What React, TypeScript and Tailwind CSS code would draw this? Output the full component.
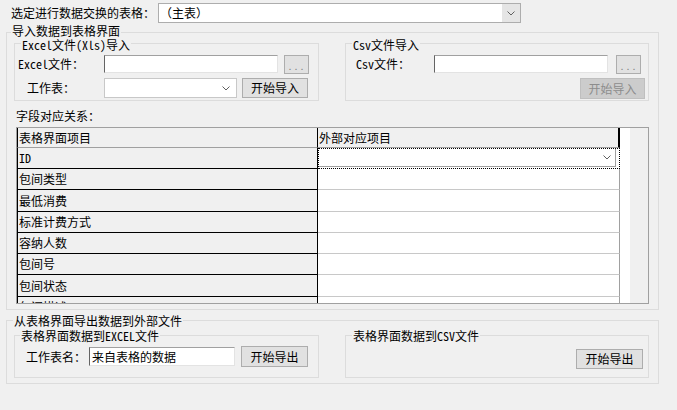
import React from 'react';

const font = "font-['Noto_Sans_Mono_CJK_SC','Noto_Sans_CJK_SC',sans-serif]";

function Chevron() {
  return (
    <svg width="8" height="5" viewBox="0 0 8 5">
      <polyline points="0.5,0.5 4,4 7.5,0.5" fill="none" stroke="#606060" strokeWidth="1" />
    </svg>
  );
}

// 分组框标题：压在边框线上
function Legend({ children, className = '' }: { children: React.ReactNode; className?: string }) {
  return <div className={`w-fit bg-[#f0f0f0] px-px leading-[12px] ${className}`}>{children}</div>;
}

function TextBox({ className = '', value = '' }: { className?: string; value?: string }) {
  return (
    <div
      className={`flex items-center bg-white border border-t-[#a0a0a0] border-l-[#646464] border-r-[#e3e3e3] border-b-[#e3e3e3] pl-[2px] ${className}`}
    >
      {value}
    </div>
  );
}

function Button({ children, className = '', disabled = false }: { children: React.ReactNode; className?: string; disabled?: boolean }) {
  return (
    <div
      className={`flex items-center justify-center border ${
        disabled ? 'bg-[#cccccc] border-[#bfbfbf] text-[#8d8d8d]' : 'bg-[#e1e1e1] border-[#adadad]'
      } ${className}`}
    >
      {children}
    </div>
  );
}

function DotsButton({ className = '' }: { className?: string }) {
  return (
    <div className={`flex items-end justify-center pb-[3px] bg-[#e1e1e1] border border-[#adadad] ${className}`}>
      <span className="text-[#808080] text-[10px] leading-[8px] tracking-[1px]">...</span>
    </div>
  );
}

const rows = [
  { name: 'ID', h: 'h-[21px]' },
  { name: '包间类型', h: 'h-[21px]' },
  { name: '最低消费', h: 'h-[22px]' },
  { name: '标准计费方式', h: 'h-[21px]' },
  { name: '容纳人数', h: 'h-[21px]' },
  { name: '包间号', h: 'h-[21px]' },
  { name: '包间状态', h: 'h-[22px]' },
  { name: '包间描述', h: 'h-[21px]' },
];

export default function App() {
  return (
    <div className={`w-[677px] h-[410px] overflow-hidden bg-[#f0f0f0] text-[12px] leading-[14px] text-black ${font}`}>
      {/* 表格选择 */}
      <div className="flex items-center pt-[3px]">
        <span className="ml-[11px] w-[147px]">选定进行数据交换的表格：</span>
        <div className="flex h-[20px] w-[363px] border border-[#adadad] bg-white">
          <div className="flex flex-1 items-center pl-[1px]">（主表）</div>
          <div className="flex w-[18px] items-center justify-center bg-[#e5e5e5]">
            <Chevron />
          </div>
        </div>
      </div>

      {/* 导入 */}
      <div className="ml-[6px] mt-[9px] h-[278px] w-[653px] border border-[#dcdcdc]">
        <Legend className="-mt-[8px] ml-[4px]">导入数据到表格界面</Legend>
        <div className="mt-[6px] flex">
          <div className="ml-[7px] h-[58px] w-[305px] border border-[#dcdcdc]">
            <Legend className="-mt-[5px] ml-[6px]">Excel文件(Xls)导入</Legend>
            <div className="mt-[3px] flex h-[20px] items-center">
              <span className="ml-[3px] w-[86px]">Excel文件：</span>
              <TextBox className="h-[18px] w-[174px]" />
              <DotsButton className="ml-[6px] h-[19px] w-[25px]" />
            </div>
            <div className="mt-[4px] flex h-[20px] items-center">
              <span className="ml-[12px] w-[77px]">工作表：</span>
              <div className="flex h-[20px] w-[133px] items-center justify-end border border-[#c8c8c8] bg-white pr-[6px]">
                <Chevron />
              </div>
              <Button className="ml-[5px] h-[20px] w-[66px]">开始导入</Button>
            </div>
          </div>

          <div className="ml-[26px] h-[58px] w-[304px] border border-[#dcdcdc]">
            <Legend className="-mt-[5px] ml-[6px]">Csv文件导入</Legend>
            <div className="mt-[3px] flex h-[20px] items-center">
              <span className="ml-[10px] w-[78px]">Csv文件：</span>
              <TextBox className="h-[18px] w-[174px]" />
              <DotsButton className="ml-[8px] h-[19px] w-[25px]" />
            </div>
            <div className="mt-[4px] flex justify-end pr-[3px]">
              <Button disabled className="h-[21px] w-[65px]">开始导入</Button>
            </div>
          </div>
        </div>

        <div className="ml-[9px] mt-[8px]">字段对应关系：</div>

        {/* 字段对应表 */}
        <div className="ml-[9px] mt-[4px] flex h-[177px] w-[633px] overflow-hidden border border-[#a0a0a0]">
          <div className="flex w-[603px] flex-col">
            <div className="flex h-[20px] shrink-0">
              <div className="flex w-[301px] items-center border-x border-black border-b border-b-[#a0a0a0] pl-[1px]">表格界面项目</div>
              <div className="flex w-[302px] items-center border-r-2 border-black border-b border-b-[#a0a0a0] pl-[1px]">外部对应项目</div>
            </div>
            {rows.map((r, i) => (
              <div key={r.name} className={`flex shrink-0 ${r.h}`}>
                <div className="flex w-[301px] items-center border-x border-b border-black bg-[#f0f0f0] pl-[1px]">{r.name}</div>
                {i === 0 ? (
                  <div className="flex w-[302px] bg-white outline-1 outline-dotted outline-black -outline-offset-1">
                    <div className="flex h-[19px] w-[298px] items-center justify-end border-r border-b border-[#a0a0a0] pr-[4px]">
                      <Chevron />
                    </div>
                  </div>
                ) : (
                  <div className="w-[302px] border-r border-b border-r-[#a0a0a0] border-b-[#c8c8c8] bg-white" />
                )}
              </div>
            ))}
          </div>
          <div className="w-[10px] bg-white" />
          <div className="flex-1 bg-[#f0f0f0]" />
        </div>
      </div>

      {/* 导出 */}
      <div className="ml-[6px] mt-[10px] h-[64px] w-[653px] border border-[#dcdcdc]">
        <Legend className="-mt-[6px] ml-[6px]">从表格界面导出数据到外部文件</Legend>
        <div className="mt-[8px] flex">
          <div className="ml-[7px] h-[43px] w-[305px] border border-[#dcdcdc]">
            <Legend className="-mt-[6px] ml-[5px]">表格界面数据到EXCEL文件</Legend>
            <div className="mt-[4px] flex h-[21px] items-center">
              <span className="ml-[11px] w-[63px]">工作表名：</span>
              <TextBox className="h-[19px] w-[146px]" value="来自表格的数据" />
              <Button className="ml-[6px] h-[21px] w-[67px]">开始导出</Button>
            </div>
          </div>
          <div className="ml-[26px] h-[43px] w-[304px] border border-[#dcdcdc]">
            <Legend className="-mt-[6px] ml-[6px]">表格界面数据到CSV文件</Legend>
            <div className="mt-[7px] flex justify-end pr-[5px]">
              <Button className="h-[20px] w-[67px]">开始导出</Button>
            </div>
          </div>
        </div>
      </div>
    </div>
  );
}
